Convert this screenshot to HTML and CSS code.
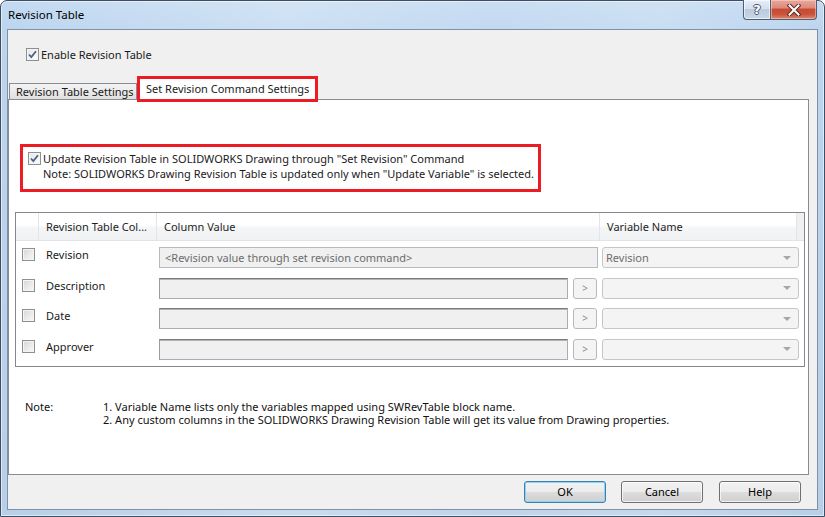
FILE: index.html
```html
<!DOCTYPE html>
<html>
<head>
<meta charset="utf-8">
<title>Revision Table</title>
<link rel="stylesheet" href="styles.css">
</head>
<body>
<div class="window">
  <div class="titlebar">
    <span class="title">Revision Table</span>
    <div class="caps">
      <div class="cap cap-help"><span class="qmark">?</span></div>
      <div class="cap cap-close">
        <svg width="14" height="12" viewBox="0 0 14 12">
          <path d="M2.5 1.5 L11.5 10.5 M11.5 1.5 L2.5 10.5" stroke="#5b2a22" stroke-width="4" stroke-linecap="square" fill="none"/>
          <path d="M2.5 1.5 L11.5 10.5 M11.5 1.5 L2.5 10.5" stroke="#ffffff" stroke-width="2" stroke-linecap="square" fill="none"/>
        </svg>
      </div>
    </div>
  </div>
  <div class="client">
    <div class="enable">
      <span class="cb checked"><svg width="11" height="11" viewBox="0 0 11 11"><path d="M2 5.5 L4.3 8 L9 2.2" stroke="#4d6185" stroke-width="1.8" fill="none"/></svg></span>
      <span class="enable-text">Enable Revision Table</span>
    </div>
    <div class="tabs">
      <div class="tab">Revision Table Settings</div>
      <div class="tab tab-active">Set Revision Command Settings</div>
    </div>
    <div class="panel">
      <div class="redbox">
        <div class="rb-line">
          <span class="cb checked"><svg width="11" height="11" viewBox="0 0 11 11"><path d="M2 5.5 L4.3 8 L9 2.2" stroke="#4d6185" stroke-width="1.8" fill="none"/></svg></span>
          <span class="rb-text">Update Revision Table in SOLIDWORKS Drawing through "Set Revision" Command</span>
        </div>
        <div class="rb-note">Note: SOLIDWORKS Drawing Revision Table is updated only when "Update Variable" is selected.</div>
      </div>
      <div class="grid">
        <div class="ghead">
          <div class="hcell"></div>
          <div class="hcell">Revision Table Col...</div>
          <div class="hcell">Column Value</div>
          <div class="hcell">Variable Name</div>
          <div class="hcell hcell-last"></div>
        </div>
        <div class="rows">
          <div class="row">
            <div class="c-check"><span class="cb"></span></div>
            <div class="c-name">Revision</div>
            <div class="c-value"><div class="tb tb-full">&lt;Revision value through set revision command&gt;</div></div>
            <div class="c-var"><div class="dd"><span class="dd-text">Revision</span><span class="dd-arrow"></span></div></div>
          </div>
          <div class="row">
            <div class="c-check"><span class="cb"></span></div>
            <div class="c-name">Description</div>
            <div class="c-value"><div class="tb"></div><div class="mini">&gt;</div></div>
            <div class="c-var"><div class="dd"><span class="dd-text"></span><span class="dd-arrow"></span></div></div>
          </div>
          <div class="row">
            <div class="c-check"><span class="cb"></span></div>
            <div class="c-name">Date</div>
            <div class="c-value"><div class="tb"></div><div class="mini">&gt;</div></div>
            <div class="c-var"><div class="dd"><span class="dd-text"></span><span class="dd-arrow"></span></div></div>
          </div>
          <div class="row">
            <div class="c-check"><span class="cb"></span></div>
            <div class="c-name">Approver</div>
            <div class="c-value"><div class="tb"></div><div class="mini">&gt;</div></div>
            <div class="c-var"><div class="dd"><span class="dd-text"></span><span class="dd-arrow"></span></div></div>
          </div>
        </div>
      </div>
      <div class="notes">
        <div class="notes-label">Note:</div>
        <div class="notes-list">
          <div>1. Variable Name lists only the variables mapped using SWRevTable block name.</div>
          <div>2. Any custom columns in the SOLIDWORKS Drawing Revision Table will get its value from Drawing properties.</div>
        </div>
      </div>
    </div>
    <div class="footer">
      <div class="btn btn-default">OK</div>
      <div class="btn btn-cancel">Cancel</div>
      <div class="btn">Help</div>
    </div>
  </div>
</div>
</body>
</html>
```

FILE: styles.css
```css
* { box-sizing: border-box; }
html, body { margin: 0; padding: 0; }
body {
  width: 825px;
  height: 517px;
  overflow: hidden;
  background: #ffffff;
  font-family: "Noto Sans", "Segoe UI", "Liberation Sans", sans-serif;
  font-size: 11px;
  color: #1a1a1a;
}

.window {
  width: 825px;
  height: 517px;
  display: flex;
  flex-direction: column;
  padding: 0 6px 6px 6px;
  border: 1px solid #3d4e62;
  border-radius: 7px 7px 0 0;
  background:
    linear-gradient(90deg, rgba(255,255,255,0) 0, rgba(255,255,255,0.25) 35%, rgba(255,255,255,0.1) 60%, rgba(255,255,255,0.2) 80%, rgba(255,255,255,0) 100%),
    linear-gradient(180deg, #c3daf2 0, #bcd5ee 30px, #b7cfe9 100%);
  box-shadow: inset 0 0 0 1px rgba(255,255,255,0.55);
}

.titlebar {
  height: 28px;
  display: flex;
  align-items: flex-start;
  flex: none;
}
.title {
  margin: 7px 0 0 1px;
  font-size: 11.5px;
  line-height: 14px;
  color: #000;
}
.caps {
  margin: -1px 1px 0 auto;
  display: flex;
  height: 20px;
}
.cap {
  height: 20px;
  display: flex;
  align-items: center;
  justify-content: center;
  border: 1px solid #4f5f73;
  border-top: none;
}
.cap-help {
  width: 27px;
  border-right: none;
  border-radius: 0 0 0 4px;
  background: linear-gradient(180deg, #e6eef7 0, #d4e0ee 45%, #bccbdd 50%, #c9d7e7 100%);
  box-shadow: inset 0 0 0 1px rgba(255,255,255,0.6);
}
.qmark {
  font-family: "DejaVu Sans", sans-serif;
  font-weight: bold;
  font-size: 13px;
  line-height: 14px;
  color: #ffffff;
  text-shadow: -1px 0 #45566b, 1px 0 #45566b, 0 -1px #45566b, 0 1px #45566b;
}
.cap-close {
  width: 47px;
  border-radius: 0 0 4px 0;
  background: linear-gradient(180deg, #e9a99c 0, #dd8b7b 40%, #c84a33 50%, #c9533b 75%, #dc8a70 100%);
  box-shadow: inset 0 0 0 1px rgba(255,220,210,0.5);
}

.client {
  flex: 1;
  display: flex;
  flex-direction: column;
  background: #f0f0f0;
  border: 1px solid #8191a5;
}

.cb {
  width: 13px;
  height: 13px;
  flex: none;
  display: inline-flex;
  align-items: center;
  justify-content: center;
  border: 1px solid #8e8f8f;
  background: linear-gradient(135deg, #d3d6da 0, #ececec 60%, #f8f8f8 100%);
  box-shadow: inset 0 0 0 1px #f4f4f4;
}
.cb.checked {
  background: linear-gradient(135deg, #e4e6ea 0, #f6f6f6 70%, #ffffff 100%);
}

.enable {
  display: flex;
  align-items: center;
  height: 13px;
  margin: 18px 0 0 18px;
}
.enable-text { margin-left: 2px; line-height: 15px; }

.tabs {
  display: flex;
  align-items: flex-end;
  height: 23px;
  margin-top: 15px;
  position: relative;
  z-index: 1;
}
.tab {
  width: 128px;
  height: 16px;
  margin-left: 1px;
  padding-left: 6px;
  border: 1px solid #898c95;
  border-bottom: none;
  background: linear-gradient(180deg, #f3f3f3 0, #ebebeb 50%, #dedede 100%);
  line-height: 15px;
  white-space: nowrap;
}
.tab-active {
  width: 181px;
  height: 26px;
  margin: 0 0 -3px 0;
  padding-left: 6px;
  border: 3px solid #ed1c24;
  background: #ffffff;
  line-height: 20px;
}

.panel {
  width: 801px;
  height: 376px;
  border: 1px solid #898c95;
  background: #ffffff;
  flex: none;
}

.redbox {
  width: 521px;
  height: 48px;
  margin: 44px 0 0 11px;
  padding: 4px 0 0 5px;
  border: 3px solid #ed1c24;
}
.rb-line {
  display: flex;
  align-items: center;
  height: 15px;
}
.rb-text { margin-left: 2px; line-height: 15px; white-space: nowrap; }
.rb-note { padding-left: 15px; line-height: 15px; white-space: nowrap; }

.grid {
  width: 790px;
  height: 155px;
  margin: 20px 0 0 6px;
  border: 1px solid #828790;
}
.ghead {
  display: grid;
  grid-template-columns: 23px 118px 443px 197px 1fr;
  height: 28px;
  border-bottom: 1px solid #e1e3e6;
  background: linear-gradient(180deg, #ffffff 0, #ffffff 45%, #f4f5f7 55%, #f1f2f4 100%);
}
.hcell {
  padding-left: 7px;
  line-height: 27px;
  color: #1e1e1e;
  border-right: 1px solid #e3e5e8;
  white-space: nowrap;
}
.hcell-last { border-right: none; background: #f0f0f0; }

.rows { padding-top: 1px; }
.row {
  display: grid;
  grid-template-columns: 23px 118px 443px 197px 1fr;
  height: 30.5px;
  align-items: start;
}
.c-check { padding: 6px 0 0 6px; display: flex; }
.c-name { padding: 5px 0 0 7px; line-height: 15px; }
.c-value { display: flex; padding-top: 5px; }
.tb {
  width: 409px;
  height: 21px;
  margin-left: 2px;
  border: 1px solid #abadb3;
  border-top-color: #7a7a7a;
  border-left-color: #9c9c9c;
  background: #f0f0f0;
  box-shadow: inset 0 1px 0 #b4b4b4;
  padding-left: 5px;
  line-height: 19px;
  color: #6d6d6d;
  white-space: nowrap;
}
.tb-full {
  width: 439px;
  border-color: #b7b9bd;
  box-shadow: none;
}
.mini {
  width: 24px;
  height: 21px;
  margin-left: 5px;
  border: 1px solid #b8b8b8;
  border-radius: 3px;
  background: #f4f4f4;
  color: #8a8a8a;
  font-size: 10px;
  line-height: 19px;
  text-align: center;
}
.c-var { padding-top: 5px; }
.dd {
  width: 197px;
  height: 21px;
  margin-left: 2px;
  display: flex;
  align-items: center;
  justify-content: space-between;
  border: 1px solid #c6c6c6;
  border-radius: 3px;
  background: #f4f4f4;
  padding: 0 7px 0 3px;
}
.dd-text { color: #6d6d6d; line-height: 19px; }
.dd-arrow {
  width: 0;
  height: 0;
  border-left: 4px solid transparent;
  border-right: 4px solid transparent;
  border-top: 4px solid #a6a6a6;
}

.notes {
  display: flex;
  margin: 33px 0 0 16px;
  line-height: 13px;
  font-size: 11px;
  color: #111;
}
.notes-label { width: 78px; flex: none; }
.notes-list { white-space: nowrap; }

.footer {
  flex: 1;
  display: flex;
  justify-content: flex-end;
  align-items: flex-start;
  padding: 6px 16px 0 0;
}
.btn {
  width: 82px;
  height: 22px;
  border: 1px solid #707070;
  border-radius: 3px;
  background: linear-gradient(180deg, #f2f2f2 0, #ebebeb 50%, #dddddd 51%, #cfcfcf 100%);
  box-shadow: inset 0 0 0 1px rgba(255,255,255,0.7);
  text-align: center;
  line-height: 20px;
  color: #000;
}
.btn-default {
  margin-right: 15px;
  border-color: #3c7fb1;
  box-shadow: inset 0 0 0 1px #8fd3f7;
}
.btn-cancel { margin-right: 16px; }
```
